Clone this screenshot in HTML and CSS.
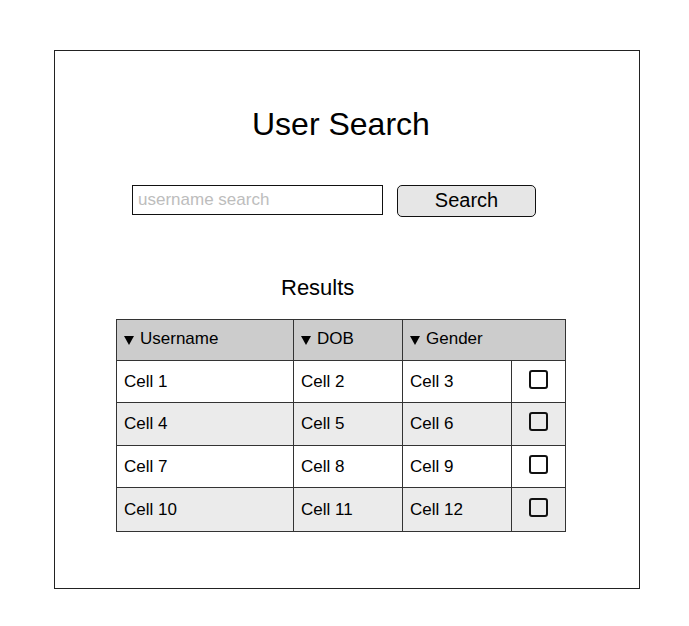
FILE: index.html
```html
<!DOCTYPE html>
<html>
<head>
<meta charset="utf-8">
<link rel="stylesheet" href="styles.css">
</head>
<body>
<div class="frame">
  <h1 class="title">User Search</h1>
  <div class="search-row">
    <input class="search-input" type="text" placeholder="username search">
    <button class="search-btn">Search</button>
  </div>
  <div class="results-label">Results</div>
  <div class="table">
    <div class="th"><span class="tri"></span>Username</div>
    <div class="th"><span class="tri"></span>DOB</div>
    <div class="th span2"><span class="tri"></span>Gender</div>

    <div class="td">Cell 1</div>
    <div class="td">Cell 2</div>
    <div class="td">Cell 3</div>
    <div class="td chk"><span class="box"></span></div>

    <div class="td alt">Cell 4</div>
    <div class="td alt">Cell 5</div>
    <div class="td alt">Cell 6</div>
    <div class="td alt chk"><span class="box"></span></div>

    <div class="td">Cell 7</div>
    <div class="td">Cell 8</div>
    <div class="td">Cell 9</div>
    <div class="td chk"><span class="box"></span></div>

    <div class="td alt">Cell 10</div>
    <div class="td alt">Cell 11</div>
    <div class="td alt">Cell 12</div>
    <div class="td alt chk"><span class="box"></span></div>
  </div>
</div>
</body>
</html>
```

FILE: styles.css
```css
html, body {
  margin: 0;
  padding: 0;
  background: #ffffff;
}
body {
  font-family: "Liberation Sans", Arial, sans-serif;
  color: #000;
}
.frame {
  box-sizing: border-box;
  margin: 50px 0 0 54px;
  width: 586px;
  height: 539px;
  border: 1px solid #222;
  display: flex;
  flex-direction: column;
  align-items: flex-start;
}
.title {
  margin: 57px 0 0 197px;
  font-size: 32px;
  line-height: 32px;
  font-weight: normal;
}
.search-row {
  display: flex;
  align-items: flex-start;
  gap: 14px;
  margin: 45px 0 0 77px;
}
.search-input {
  box-sizing: border-box;
  width: 251px;
  height: 30px;
  margin: 0;
  border: 1px solid #111;
  border-radius: 0;
  padding: 0 0 0 5px;
  font-family: "Liberation Sans", Arial, sans-serif;
  font-size: 17px;
  color: #000;
  outline: none;
  background: #fff;
}
.search-input::placeholder {
  color: #bdbdbd;
}
.search-btn {
  box-sizing: border-box;
  width: 139px;
  height: 32px;
  margin: 0;
  border: 1px solid #111;
  border-radius: 5px;
  background: #e6e6e6;
  font-family: "Liberation Sans", Arial, sans-serif;
  font-size: 20px;
  line-height: 28px;
  color: #000;
  padding: 0 0 2px 0;
}
.results-label {
  margin: 60px 0 0 226px;
  font-size: 22px;
  line-height: 22px;
}
.table {
  margin: 20px 0 0 61px;
  display: grid;
  grid-template-columns: 176px 108px 108px 53px;
  grid-template-rows: 40px 41px 42px 41px 43px;
  gap: 1px;
  background: #333;
  border: 1px solid #333;
  font-size: 17px;
}
.th {
  background: #cccccc;
  display: flex;
  align-items: center;
  padding-left: 7px;
  padding-bottom: 2px;
}
.span2 {
  grid-column: span 2;
}
.tri {
  display: inline-block;
  width: 0;
  height: 0;
  border-left: 5px solid transparent;
  border-right: 5px solid transparent;
  border-top: 9px solid #000;
  margin-right: 6px;
  margin-top: 3px;
}
.td {
  background: #ffffff;
  display: flex;
  align-items: center;
  padding-left: 7px;
}
.td.alt {
  background: #ebebeb;
}
.chk {
  padding-left: 0;
  justify-content: center;
  padding-bottom: 5px;
}
.box {
  box-sizing: border-box;
  width: 19px;
  height: 19px;
  border: 2px solid #111;
  border-radius: 3px;
}
```
